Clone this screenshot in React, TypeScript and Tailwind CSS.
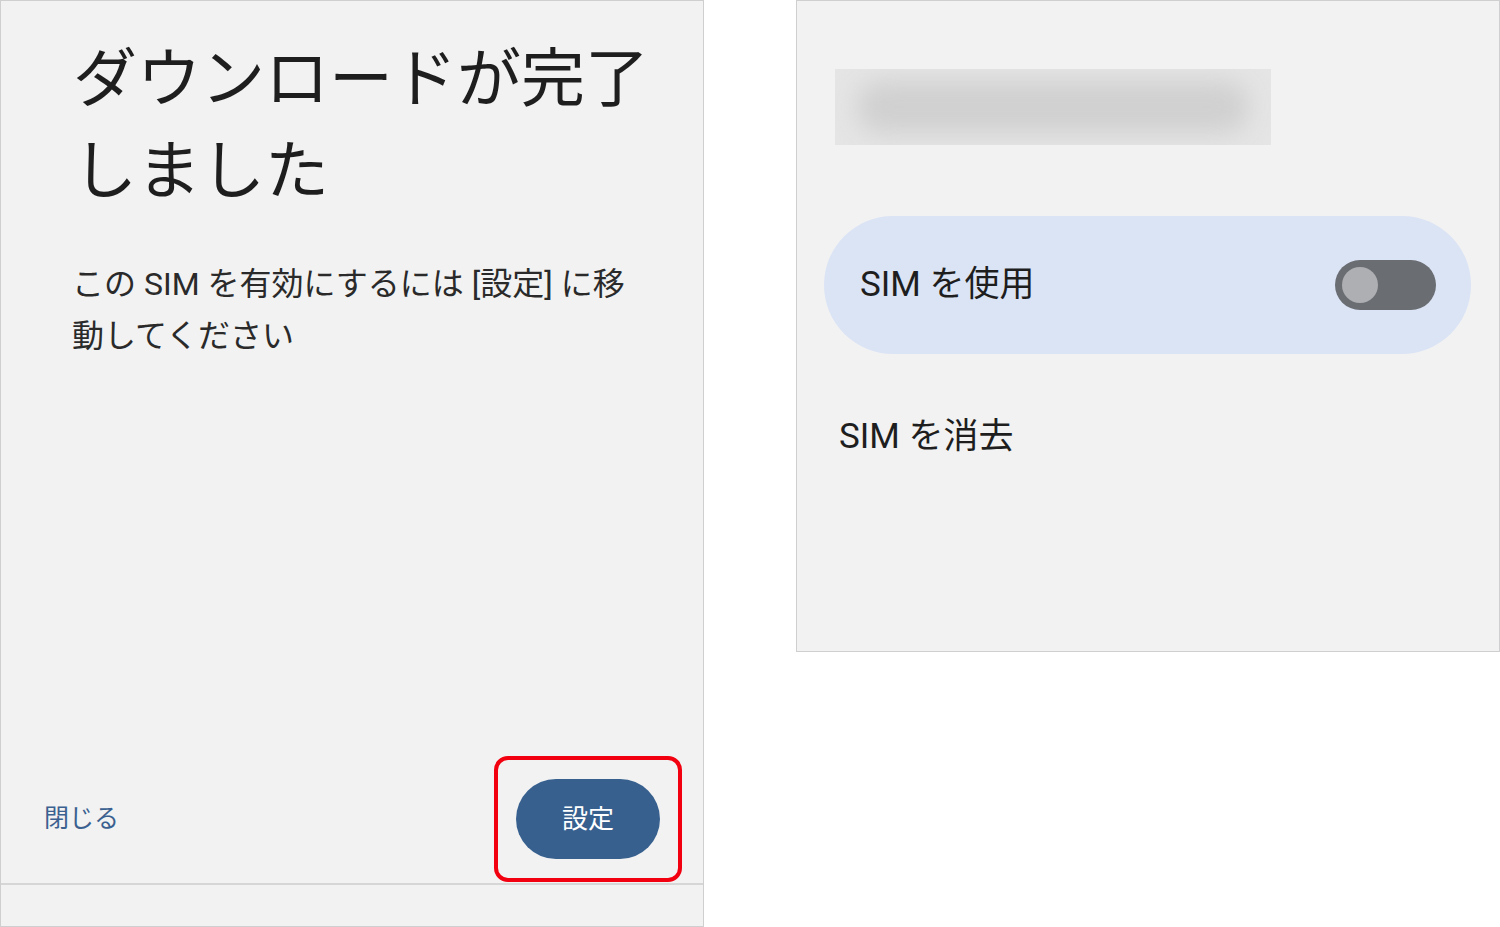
import React from "react";

const font = { fontFamily: 'Roboto, "Noto Sans CJK JP", sans-serif' };

export default function App() {
  return (
    <div className="flex w-[1500px] h-[927px] bg-white items-start" style={font}>
      {/* Left panel */}
      <div className="flex flex-col w-[704px] h-[927px] bg-[#f2f2f2] border border-[#cfcfcf]">
        <div className="pt-[33px] pl-[72px] text-[64px] leading-[92px] text-[#1e1e1e]">
          <div>ダウンロードが完了</div>
          <div>しました</div>
        </div>
        <div className="mt-[40px] pl-[71px] text-[32px] leading-[52px] text-[#2a2a2a]">
          <div>この SIM を有効にするには [設定] に移</div>
          <div>動してください</div>
        </div>
        <div className="flex-1" />
        <div className="flex items-center justify-between pl-[43px] pr-[21px]">
          <span className="text-[25px] text-[#3b6190]">閉じる</span>
          <div className="border-4 border-[#f20010] rounded-[14px] px-[18px] py-[19px]">
            <div className="flex items-center justify-center w-[144px] h-[80px] rounded-full bg-[#37608f] text-white text-[26px]">
              設定
            </div>
          </div>
        </div>
        <div className="h-[2px] mt-[1px] bg-[#d6d6d6]" />
        <div className="flex-1 max-h-[41px]" />
      </div>

      <div className="w-[92px]" />

      {/* Right panel */}
      <div className="flex flex-col w-[704px] h-[652px] bg-[#f2f2f2] border border-[#cfcfcf]">
        <div className="mt-[68px] ml-[38px] w-[436px] h-[76px] bg-[#e5e5e5] overflow-hidden flex">
          <div className="flex-1 mx-[22px] my-[12px] rounded-[24px] bg-[#d0d0d0] blur-[12px]" />
        </div>
        <div className="mt-[71px] ml-[27px] w-[647px] h-[138px] rounded-full bg-[#dbe4f5] flex items-center justify-between pl-[36px] pr-[35px]">
          <span className="text-[35px] text-[#1e1e1e]">SIM を使用</span>
          <div className="flex items-center w-[101px] h-[50px] rounded-full bg-[#6a6d72] pl-[7px]">
            <div className="w-[36px] h-[36px] rounded-full bg-[#adafb2]" />
          </div>
        </div>
        <div className="mt-[58px] ml-[42px] text-[35px] leading-[50px] text-[#1e1e1e]">SIM を消去</div>
      </div>
    </div>
  );
}
